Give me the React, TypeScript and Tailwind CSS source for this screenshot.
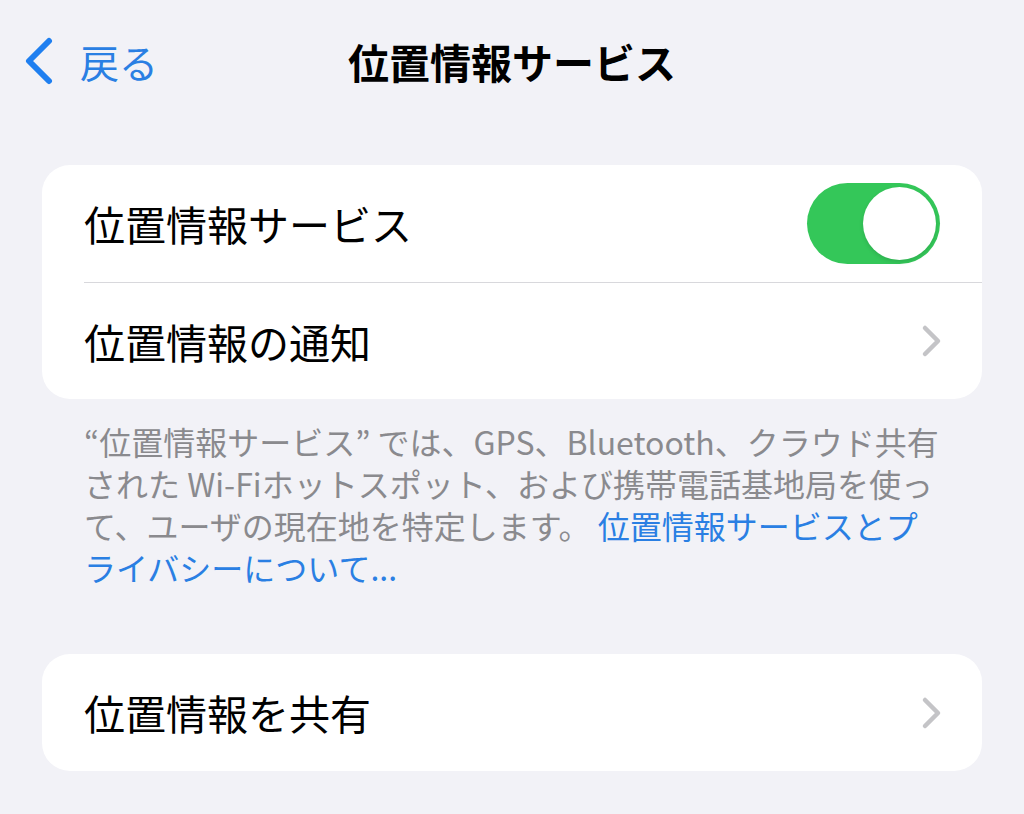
import React from "react";

const font = { fontFamily: '"Noto Sans CJK JP", "Noto Sans", sans-serif' };

function Chevron() {
  return (
    <svg width="24" height="34" viewBox="0 0 24 34" fill="none">
      <path d="M5 4 L18 17 L5 30" stroke="#c4c4c7" strokeWidth="4.5" strokeLinecap="round" strokeLinejoin="round" />
    </svg>
  );
}

export default function App() {
  return (
    <div className="w-[1024px] h-[814px] bg-[#f2f2f7] overflow-hidden" style={font}>
      <div className="relative h-[122px] flex items-center">
        <div className="flex items-center pl-[24px] gap-[26px]">
          <svg width="30" height="48" viewBox="0 0 30 48" fill="none">
            <path d="M25 4 L5 24 L25 44" stroke="#1f7ff0" strokeWidth="6" strokeLinecap="round" strokeLinejoin="round" />
          </svg>
          <span className="text-[39px] text-[#2a7fe3] leading-none">戻る</span>
        </div>
        <div className="absolute inset-0 flex items-center justify-center">
          <span className="text-[41px] font-bold text-black leading-none">位置情報サービス</span>
        </div>
      </div>
      <div className="px-[42px] pt-[43px]">
        <div className="bg-white rounded-[28px]">
          <div className="h-[117px] flex items-center justify-between pl-[42px] pr-[42px]">
            <span className="text-[41px] text-black leading-none">位置情報サービス</span>
            <div className="w-[133px] h-[81px] rounded-full bg-[#34c759] flex items-center justify-end pr-[4px]">
              <div className="w-[73px] h-[73px] rounded-full bg-white shadow-[0_2px_4px_rgba(0,0,0,0.12)]" />
            </div>
          </div>
          <div className="ml-[42px] h-px bg-[#d8d8dc]" />
          <div className="h-[116px] flex items-center justify-between pl-[42px] pr-[38px]">
            <span className="text-[41px] text-black leading-none">位置情報の通知</span>
            <Chevron />
          </div>
        </div>
        <div className="px-[42px] pt-[21px] text-[32px] leading-[42px] text-[#8a8a8e] whitespace-nowrap">
          <div>“位置情報サービス” では、GPS、Bluetooth、クラウド共有</div>
          <div>された Wi-Fiホットスポット、および携帯電話基地局を使っ</div>
          <div>
            て、ユーザの現在地を特定します。 <span className="text-[#2a7fe3]">位置情報サービスとプ</span>
          </div>
          <div className="text-[#2a7fe3]">ライバシーについて...</div>
        </div>
        <div className="mt-[66px] bg-white rounded-[28px]">
          <div className="h-[117px] flex items-center justify-between pl-[42px] pr-[38px]">
            <span className="text-[41px] text-black leading-none">位置情報を共有</span>
            <Chevron />
          </div>
        </div>
      </div>
    </div>
  );
}
